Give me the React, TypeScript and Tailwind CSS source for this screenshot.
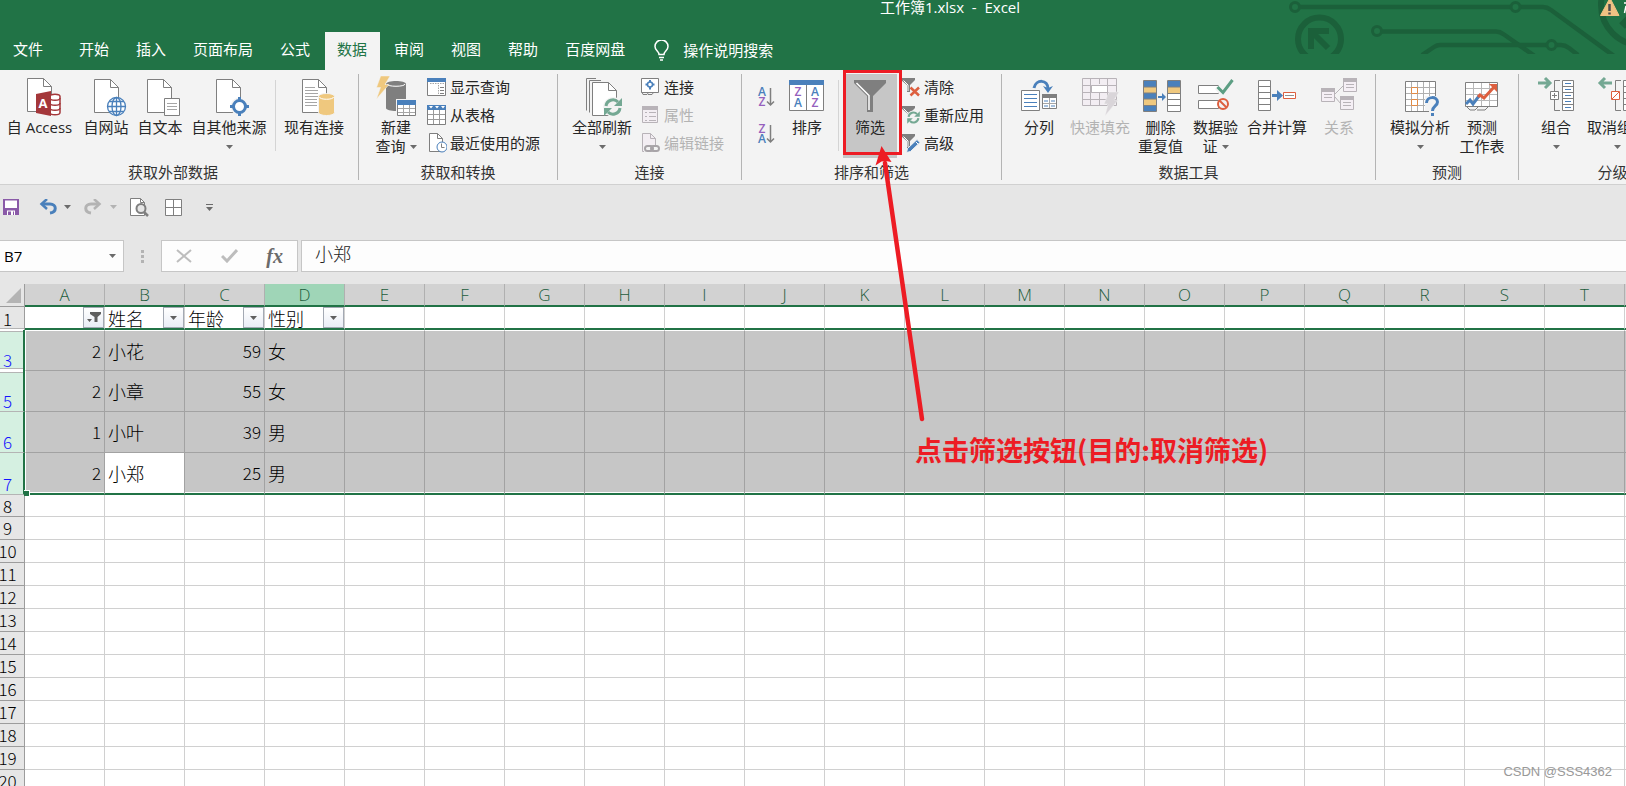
import type { ReactNode } from "react";
import clsx from "clsx";

const GRAY = "#7f7f7f";
const BLUE = "#4a80bb";
const GOLD = "#efc87e";
const GREEN = "#74a893";
const RED = "#dd5f3f";
const PURPLE = "#9560bd";
const OFF = "#b8b3b8";

const COLUMNS = "ABCDEFGHIJKLMNOPQRSTU".split("");
const PLAIN_ROWS = [8, 9, 10, 11, 12, 13, 14, 15, 16, 17, 18, 19, 20, 21];
const DATA_ROWS = [
  { row: 3, cells: ["2", "小花", "59", "女"] },
  { row: 5, cells: ["2", "小章", "55", "女"] },
  { row: 6, cells: ["1", "小叶", "39", "男"] },
  { row: 7, cells: ["2", "小郑", "25", "男"] },
];

function Caret({ className }: { className?: string }) {
  return (
    <svg width="7" height="4" viewBox="0 0 7 4" className={clsx("shrink-0", className)} fill="currentColor" aria-hidden="true">
      <path d="M0 0h7L3.5 4z" />
    </svg>
  );
}

function Doc({ x, y = 4, children }: { x: number; y?: number; children?: ReactNode }) {
  return (
    <g transform={`translate(${x} ${y})`}>
      <path d="M.5.5h16l8 8v25H.5z" fill="#fff" stroke={GRAY} />
      <path d="M16.5.5v8h8" fill="none" stroke={GRAY} />
      {children}
    </g>
  );
}

function Refresh({ x, y, size = 1 }: { x: number; y: number; size?: number }) {
  return (
    <g transform={`translate(${x} ${y}) scale(${size})`} fill="none" stroke={GREEN} strokeWidth="3">
      <circle r="10" fill="#f3f3f3" stroke="none" />
      <path d="M-7-1a7 7 0 0 1 12-4M7 1a7 7 0 0 1-12 4" />
      <path d="M9-9v8H1zM-9 9V1h8z" fill={GREEN} stroke="none" />
    </g>
  );
}

/* 48x42 icons for the large ribbon buttons */
const bigIcons: Record<string, ReactNode> = {
  access: (
    <>
      <Doc x={11} y={3} />
      <path d="M34 21.5c0-3 10-3 10 0v16c0 3-10 3-10 0z" fill="#fff" stroke="#a4373a" strokeWidth="1.5" />
      <path d="M34 23c0 3 10 3 10 0M34 28c0 3 10 3 10 0M34 33c0 3 10 3 10 0" fill="none" stroke="#a4373a" strokeWidth="1.5" />
      <path d="M20 19l15-3v25l-15-3z" fill="#a4373a" />
      <text x="27" y="33" textAnchor="middle" fontSize="13" fontWeight="700" fill="#fff">A</text>
    </>
  ),
  web: (
    <>
      <Doc x={12} />
      <g fill="none" stroke={BLUE} strokeWidth="1.3">
        <circle cx="34.5" cy="31.5" r="9" fill="#fff" />
        <ellipse cx="34.5" cy="31.5" rx="4.5" ry="9" />
        <path d="M34.5 22.5v18M25.5 31.5h18M27 26.5h15M27 36.5h15" />
      </g>
    </>
  ),
  text: (
    <>
      <Doc x={11} />
      <path d="M28.5 23.5h15v17h-15z" fill="#fff" stroke={GRAY} />
      <path d="M31 28.5h10M31 31.5h10M31 34.5h10" stroke="#a6a6a6" />
    </>
  ),
  other: (
    <>
      <Doc x={11} />
      <circle cx="34.5" cy="31.5" r="9" fill="#f3f3f3" />
      <circle cx="34.5" cy="31.5" r="6" fill="#fff" stroke={BLUE} strokeWidth="3" />
      <path d="M34.5 22v4M34.5 37v4M25 31.5h4M40 31.5h4" stroke={BLUE} strokeWidth="3" />
    </>
  ),
  existing: (
    <>
      <Doc x={12}>
        <path d="M3 8.5h10M3 11.5h13M3 14.5h13M3 17.5h13M3 20.5h12M3 23.5h12M3 26.5h12" stroke="#a6a6a6" />
      </Doc>
      <path d="M28.5 21.5c0-4 16-4 16 0v16c0 4-16 4-16 0z" fill={GOLD} stroke="#f3f3f3" />
      <path d="M29.5 22c0 3 14 3 14 0" fill="none" stroke="#fff" />
    </>
  ),
  query: (
    <>
      <path d="M14 9c0-4 20-4 20 0v24c0 4-20 4-20 0z" fill={GRAY} />
      <path d="M15 9c0 3 18 3 18 0" fill="none" stroke="#fff" />
      <path d="M8.7 1H18l-5 8.5h4L4.5 24l4-11.5h-4z" fill={GOLD} stroke="#f3f3f3" strokeWidth=".5" />
      <path d="M24 24h21v18H24z" fill="#f3f3f3" />
      <path d="M25.5 26.5h18v14h-18z" fill="#fff" stroke={GRAY} />
      <path d="M31.5 30v10M37.5 30v10M26 33.5h17M26 37.5h17" stroke="#a6a6a6" />
      <path d="M25 25h19v5H25z" fill={BLUE} />
    </>
  ),
  refreshAll: (
    <>
      <path d="M18 3.5H8.5v32" fill="none" stroke={GRAY} />
      <path d="M23 5.5H11.5v32" fill="none" stroke={GRAY} />
      <Doc x={14} y={7} />
      <Refresh x={35} y={32} />
    </>
  ),
  sort: (
    <>
      <path d="M6.5 5.5h34v30h-34z" fill="#fff" stroke={GRAY} />
      <path d="M23.5 10v25" stroke={GRAY} />
      <path d="M6 5h35v5H6z" fill={BLUE} />
      <g fontSize="12" fontWeight="600" textAnchor="middle">
        <text x="15" y="21" fill={PURPLE}>Z</text>
        <text x="15" y="32" fill={BLUE}>A</text>
        <text x="32" y="21" fill={BLUE}>A</text>
        <text x="32" y="32" fill={PURPLE}>Z</text>
      </g>
    </>
  ),
  filter: (
    <>
      <path d="M8 5h32v3L27 21v16h-6V21L8 8z" fill={GRAY} />
      <path d="M10.5 8L23 20.5V35" fill="none" stroke="#fff" strokeWidth="1.5" />
    </>
  ),
  split: (
    <>
      <path d="M6.5 15.5h18v20h-18z" fill="#fff" stroke={GRAY} />
      <path d="M9 19.5h13M9 23.5h13M9 27.5h13M9 31.5h13" stroke={BLUE} />
      <path d="M27.5 19.5h14v14h-14z" fill="#fff" stroke={GRAY} />
      <path d="M27 19h15v4H27z" fill={GRAY} />
      <path d="M34.5 23v10M28 28.5h13" stroke="#a6a6a6" />
      <path d="M29 26h4M36 26h4M29 31h4M36 31h4" stroke={BLUE} />
      <path d="M19 13c2-9 14-9 14 1" fill="none" stroke={BLUE} strokeWidth="3" />
      <path d="M28 11l5 7 5-7-5 2z" fill={BLUE} />
    </>
  ),
  flash: (
    <>
      <path d="M6.5 3.5h34v27h-34z" fill="#f3eef3" stroke={OFF} />
      <path d="M14.5 4v26M31.5 4v26M23.5 4v5M23.5 18v12M7 10.5h34M7 17.5h34M7 24.5h34" stroke={OFF} />
      <path d="M15.5 10.5h16v7h-16z" fill="#fff" stroke={OFF} />
      <path d="M33 17h10l-5 8h4L29 41l3-12h-4z" fill="#d9d5d9" stroke="#f3f3f3" strokeWidth=".5" />
    </>
  ),
  dedupe: (
    <>
      <path d="M6.5 5.5h13v31h-13z" fill={GOLD} stroke={GRAY} />
      <path d="M7 6h12v6H7zM7 18h12v6H7zM7 31h12v5H7z" fill={BLUE} />
      <path d="M7 12h12M7 18h12M7 24h12M7 30.5h12" stroke={GRAY} />
      <path d="M30.5 5.5h13v31h-13z" fill="#fff" stroke={GRAY} />
      <path d="M31 6h12v6H31z" fill={BLUE} />
      <path d="M31 12h12v6H31z" fill={GOLD} />
      <path d="M31 12h12M31 18.5h12M31 24.5h12M31 30.5h12" stroke={GRAY} />
      <path d="M21 21h4v-3l4 4-4 4v-3h-4z" fill={BLUE} />
    </>
  ),
  validate: (
    <>
      <path d="M6.5 10.5h20v8h-20zM6.5 25.5h20v8h-20z" fill="#fff" stroke={GRAY} />
      <path d="M25 12l6 6.5L41 5" fill="none" stroke="#f3f3f3" strokeWidth="6" />
      <path d="M25.5 12l5.5 5.5L40.5 5" fill="none" stroke="#5c9e83" strokeWidth="3" />
      <circle cx="31" cy="29" r="5" fill="#f3f3f3" stroke={RED} strokeWidth="2" />
      <path d="M27.5 25.5l7 7" stroke={RED} strokeWidth="2" />
    </>
  ),
  consolidate: (
    <>
      <path d="M5.5 5.5h12v30h-12z" fill="#fff" stroke={GRAY} />
      <path d="M6 11.5h11M6 17.5h11M6 23.5h11M6 29.5h11" stroke={GRAY} />
      <path d="M19 19h5v-4l6 5.5-6 5.5v-4h-5z" fill={BLUE} />
      <path d="M30.5 17.5h12v6h-12z" fill="#fff" stroke={RED} />
      <path d="M32 20.5h9" stroke="#8f8f8f" />
    </>
  ),
  relations: (
    <>
      <path d="M20 19l8-8M20 22l6 7" stroke={OFF} />
      <g fill="#f5eff5" stroke={OFF}>
        <path d="M6.5 13.5h13v13h-13zM28.5 3.5h13v13h-13zM25.5 21.5h13v13h-13z" />
        <path d="M9 19.5h8M9 22.5h8M31 9.5h8M31 12.5h8M28 27.5h8M28 30.5h8" />
      </g>
      <path d="M6 13h14v4H6zM28 3h14v4H28zM25 21h14v4H25z" fill={OFF} />
    </>
  ),
  whatIf: (
    <>
      <path d="M9.5 6.5h30v30h-30z" fill="#fff" stroke={GRAY} />
      <path d="M15.5 7v29M21.5 7v29M27.5 7v29M33.5 7v29M10 12.5h29M10 18.5h29M10 24.5h29M10 30.5h29" stroke="#b0b0b0" />
      <path d="M15.5 12.5h6v6h-6zM15.5 24.5h6v6h-6z" fill="#fff" stroke="#e08a45" />
      <path d="M29 21h14v21H33v-6h-4z" fill="#f3f3f3" />
      <path d="M30.5 28c0-7 11-7 11-1 0 4-5 4-5 9" fill="none" stroke={BLUE} strokeWidth="3" />
      <path d="M35 38h3v3h-3z" fill={BLUE} />
    </>
  ),
  forecast: (
    <>
      <path d="M7.5 7.5h32v24h-32z" fill="#fff" stroke={GRAY} />
      <path d="M15.5 8v23M23.5 8v23M31.5 8v23M8 13.5h31M8 19.5h31M8 25.5h31" stroke="#b8b8b8" />
      <path d="M9 32l3 3h5l3-3M19 35h8l3-3" fill="none" stroke={GRAY} />
      <path d="M8 29l4-4 3 4 6-8" fill="none" stroke={BLUE} strokeWidth="3" />
      <path d="M20 22l2-2 4 3L37 11" fill="none" stroke={RED} strokeWidth="3" />
      <path d="M31 9h8v8z" fill={RED} />
    </>
  ),
  group: (
    <>
      <path d="M6 8h11M13 3l5 5-5 5" fill="none" stroke={GREEN} strokeWidth="3" />
      <path d="M28 5.5h-5.5V17M22.5 25v10.5H28" fill="none" stroke={GRAY} />
      <path d="M18.5 16.5h8v8h-8z" fill="#fff" stroke={GRAY} />
      <path d="M20 20.5h5M22.5 18v5" stroke={GRAY} />
      <path d="M30.5 5.5h11v30h-11z" fill="#fff" stroke={GRAY} />
      <path d="M31 11.5h10M31 17.5h10M31 23.5h10M31 29.5h10" stroke={GRAY} />
      <path d="M33 8.5h6M33 14.5h6M33 20.5h6M33 26.5h6M33 32.5h6" stroke={BLUE} />
    </>
  ),
  ungroup: (
    <>
      <path d="M19 8H8M12 3L7 8l5 5" fill="none" stroke={GREEN} strokeWidth="3" />
      <path d="M28 5.5h-5.5V17M22.5 25v10.5H28" fill="none" stroke={GRAY} />
      <path d="M18.5 16.5h8v8h-8z" fill="#fff" stroke={RED} />
      <path d="M19 24l7-7" stroke={RED} />
      <path d="M30.5 5.5h11v30h-11z" fill="#fff" stroke={GRAY} />
      <path d="M31 11.5h10M31 17.5h10M31 23.5h10M31 29.5h10" stroke={GRAY} />
    </>
  ),
};

const smallFunnel = (
  <>
    <path d="M0 1h14v2L9 8v7H6V8L0 3z" fill={GRAY} />
    <path d="M2.5 3.5L7 8v6" fill="none" stroke="#fff" />
  </>
);

/* 20x20 icons for the stacked ribbon buttons */
const smallIcons: Record<string, ReactNode> = {
  showQuery: (
    <>
      <path d="M.5 1.5h18v17H.5z" fill="#fff" stroke={GRAY} />
      <path d="M0 1h19v4H0z" fill={BLUE} />
      <path d="M11.5 8v10M3 6.5h14" stroke="#a6a6a6" strokeDasharray="1.5 1" />
      <path d="M13 10.5h4M13 13.5h4M13 16.5h4" stroke={GRAY} />
    </>
  ),
  fromTable: (
    <>
      <path d="M.5 1.5h18v18H.5z" fill="#fff" stroke={GRAY} />
      <path d="M6.5 5v14M12.5 5v14M1 9.5h17M1 14.5h17" stroke="#9a9a9a" />
      <path d="M0 0h19v5H0z" fill={BLUE} />
      <path d="M2 1h4L4 3.5zM8 1h4l-2 2.5zM14 1h4l-2 2.5z" fill="#fff" />
    </>
  ),
  recent: (
    <>
      <path d="M2.5.5h8l5 5v13h-13z" fill="#fff" stroke={GRAY} />
      <path d="M10.5.5v5h5" fill="none" stroke={GRAY} />
      <circle cx="15" cy="14" r="5" fill="#fff" stroke={BLUE} />
      <path d="M14.5 10.5v4h3" fill="none" stroke={GRAY} />
    </>
  ),
  links: (
    <>
      <path d="M.5 1.5h17v14H.5z" fill="#fff" stroke={GRAY} />
      <circle cx="9" cy="7.5" r="2.5" fill="none" stroke={BLUE} strokeWidth="1.5" />
      <path d="M9 3v2M9 10v2.5M4.5 7.5h2M11.5 7.5h2" stroke={BLUE} strokeWidth="2" />
      <path d="M1 15l1 2.5h4l1.5-2M7 17.5h4l1.5-2" fill="none" stroke={GRAY} />
    </>
  ),
  props: (
    <>
      <path d="M1.5 1.5h15v16h-15z" fill="#f3eef3" stroke={OFF} />
      <path d="M1 1h16v4H1z" fill={OFF} />
      <path d="M8 7.5h7M8 11.5h7M8 15.5h7M4 7.5h2M4 11.5h2M4 15.5h2" stroke={OFF} />
    </>
  ),
  editLinks: (
    <>
      <path d="M1.5.5h8l5 5v13h-13z" fill="#f3eef3" stroke={OFF} />
      <path d="M9.5.5v5h5" fill="none" stroke={OFF} />
      <path d="M3 12h16v8H3z" fill="#f3f3f3" />
      <rect x="4" y="13" width="8" height="5" rx="2.5" fill="none" stroke="#a8a4a8" strokeWidth="2" />
      <rect x="10" y="13" width="8" height="5" rx="2.5" fill="none" stroke="#a8a4a8" strokeWidth="2" />
    </>
  ),
  clear: (
    <>
      {smallFunnel}
      <path d="M9.5 10.5l8.5 8M18 10.5l-8.5 8" stroke={RED} strokeWidth="2.5" />
    </>
  ),
  reapply: (
    <>
      {smallFunnel}
      <Refresh x={12.5} y={12.5} size={0.7} />
    </>
  ),
  advanced: (
    <>
      {smallFunnel}
      <path d="M5.5 19.5l1-4L16 6.5l3 3L9.5 18.5z" fill={BLUE} stroke="#f3f3f3" />
      <path d="M15 9l2 2" stroke="#fff" />
    </>
  ),
};

type BigProps = {
  icon: string;
  lines: string[];
  caret?: boolean;
  disabled?: boolean;
  active?: boolean;
  className: string;
};

function BigButton({ icon, lines, caret, disabled, active, className }: BigProps) {
  return (
    <button
      type="button"
      disabled={disabled}
      aria-pressed={active}
      className={clsx(
        "flex h-[84px] shrink-0 flex-col items-center pt-px leading-[19px] whitespace-nowrap",
        disabled ? "text-[#b3b3b3]" : "text-[#262626]",
        active && "bg-[#c6c6c6]",
        className,
      )}
    >
      <svg width="48" height="42" viewBox="0 0 48 42" className="mb-px shrink-0" aria-hidden="true">{bigIcons[icon]}</svg>
      <span className="block">{lines[0]}</span>
      {(lines[1] || caret) && (
        <span className="flex h-[19px] items-center gap-1">
          {lines[1]}
          {caret && <Caret className="text-[#6b6b6b]" />}
        </span>
      )}
    </button>
  );
}

function SmallButton({ icon, label, disabled }: { icon: string; label: string; disabled?: boolean }) {
  return (
    <button
      type="button"
      disabled={disabled}
      className={clsx("flex h-7 items-center gap-[3px] pb-0.5 whitespace-nowrap", disabled ? "text-[#b3b3b3]" : "text-[#262626]")}
    >
      <svg width="20" height="20" viewBox="0 0 20 20" className="shrink-0" aria-hidden="true">{smallIcons[icon]}</svg>
      {label}
    </button>
  );
}

function Group({ label, className, children }: { label: string; className: string; children: ReactNode }) {
  return (
    <section aria-label={label} className={clsx("relative flex shrink-0 flex-col border-r border-[#b4b4b4]", className)}>
      <div className="flex h-[84px]">{children}</div>
      <div className="pt-1 text-center leading-[20px] text-[#333]">{label}</div>
    </section>
  );
}

function SortButton({ first, second, label }: { first: string; second: string; label: string }) {
  return (
    <button type="button" aria-label={label} className="flex h-[37px] items-center">
      <svg width="20" height="22" viewBox="0 0 20 22" className="overflow-visible" aria-hidden="true">
        <g fontSize="12" fontWeight="600" textAnchor="middle">
          <text x="4" y="10" fill={first === "A" ? BLUE : PURPLE}>{first}</text>
          <text x="4" y="20" fill={second === "A" ? BLUE : PURPLE}>{second}</text>
        </g>
        <path d="M12.5 2v17M9 15.5l3.5 3.5 3.5-3.5" fill="none" stroke={GRAY} strokeWidth="1.5" />
      </svg>
    </button>
  );
}

function Divider() {
  return <div className="mt-1.5 h-[71px] w-px shrink-0 bg-[#d4d4d4]" />;
}

function TitleBar() {
  const tabs = ["开始", "插入", "页面布局", "公式", "数据", "审阅", "视图", "帮助", "百度网盘"];
  return (
    <header className="relative h-[70px] shrink-0 overflow-hidden bg-[#217346] text-white">
      <svg width="366" height="54" viewBox="0 0 366 54" className="absolute top-0 right-0" aria-hidden="true">
        <g fill="none" stroke="#1b603a" strokeWidth="4.5">
          <circle cx="35" cy="7" r="4.5" strokeWidth="3" />
          <path d="M40 7h210M261 7h22q4 0 8 3l63 46" />
          <circle cx="255.5" cy="7" r="4.5" strokeWidth="3" />
          <circle cx="117" cy="31" r="4.5" strokeWidth="3" />
          <path d="M122 31.5h114q4 0 8 3l30 21" />
          <path d="M162 55l12-8q3-2 6-2h106M297 45h4q4 0 8 3l9 7" />
          <circle cx="291.5" cy="45" r="4.5" strokeWidth="3" />
          <circle cx="59.5" cy="39" r="21.5" strokeWidth="6" />
          <path d="M51 49V31h18M52 32l16 16" strokeWidth="6" />
          <circle cx="381" cy="5" r="40" strokeWidth="6" />
          <path d="M372 16l-10 10" strokeWidth="8" />
        </g>
        <path d="M350-2L359 15.5h-18.5z" fill="#efc283" stroke="#efc283" />
        <path d="M349.5 4v7M349.5 12.5v2" stroke="#4d4d4d" strokeWidth="2.5" />
        <path d="M364 3h2M366 6l-1.5 7" stroke="#fff" strokeWidth="1.5" />
      </svg>
      <div className="flex h-8 justify-center pl-[274px]">
        <h1 className="text-[15px] leading-[15px] whitespace-pre">工作簿1.xlsx  -  Excel</h1>
      </div>
      <nav className="relative flex h-[38px] gap-0.5 whitespace-nowrap">
        <button type="button" className="w-[65px] pb-1 pl-[13px] text-left">文件</button>
        {tabs.map((tab) => (
          <button
            key={tab}
            type="button"
            className={clsx("shrink-0 pr-[13px] pb-1 pl-3", tab === "数据" && "bg-[#f3f3f3] text-[#217346]")}
          >
            {tab}
          </button>
        ))}
        <button type="button" className="flex items-center gap-3.5 pb-0.5 pl-3.5">
          <svg width="15" height="21" viewBox="0 0 15 21" fill="none" stroke="#fff" strokeWidth="1.5" aria-hidden="true">
            <path d="M5 14.5c0-3-4-4-4-8a6.5 6.5 0 0 1 13 0c0 4-4 5-4 8zM5 17.5h5M6 20h3" />
          </svg>
          操作说明搜索
        </button>
      </nav>
    </header>
  );
}

function Ribbon() {
  return (
    <div className="flex h-[115px] shrink-0 overflow-hidden border-b border-[#d0d0d0] bg-[#f3f3f3] pt-1 pb-1">
      <Group label="获取外部数据" className="w-[359px] pr-3">
        <BigButton icon="access" lines={["自 Access"]} className="w-[79px]" />
        <BigButton icon="web" lines={["自网站"]} className="w-[54px]" />
        <BigButton icon="text" lines={["自文本"]} className="w-[54px]" />
        <BigButton icon="other" lines={["自其他来源"]} caret className="w-[84px]" />
        <div className="w-1 shrink-0" />
        <Divider />
        <BigButton icon="existing" lines={["现有连接"]} className="w-[76px]" />
      </Group>
      <Group label="获取和转换" className="w-[199px]">
        <BigButton icon="query" lines={["新建", "查询"]} caret className="ml-2 w-[58px]" />
        <div className="ml-0.5">
          <SmallButton icon="showQuery" label="显示查询" />
          <SmallButton icon="fromTable" label="从表格" />
          <SmallButton icon="recent" label="最近使用的源" />
        </div>
      </Group>
      <Group label="连接" className="w-[184px]">
        <BigButton icon="refreshAll" lines={["全部刷新"]} caret className="ml-2 w-[72px]" />
        <div className="ml-[3px]">
          <SmallButton icon="links" label="连接" />
          <SmallButton icon="props" label="属性" disabled />
          <SmallButton icon="editLinks" label="编辑链接" disabled />
        </div>
      </Group>
      <Group label="排序和筛选" className="w-[260px]">
        <div className="ml-4 flex flex-col pt-1">
          <SortButton first="A" second="Z" label="升序" />
          <SortButton first="Z" second="A" label="降序" />
        </div>
        <BigButton icon="sort" lines={["排序"]} className="ml-1 w-[50px]" />
        <div className="w-1.5 shrink-0" />
        <Divider />
        <BigButton icon="filter" lines={["筛选"]} active className="ml-1 w-[54px]" />
        <div className="ml-1">
          <SmallButton icon="clear" label="清除" />
          <SmallButton icon="reapply" label="重新应用" />
          <SmallButton icon="advanced" label="高级" />
        </div>
        {/* callout frame round the filter button */}
        <div className="absolute -top-1 left-[101px] h-[85px] w-[59px] border-3 border-[#ed1c24]" />
      </Group>
      <Group label="数据工具" className="w-[374px]">
        <BigButton icon="split" lines={["分列"]} className="ml-2 w-[58px]" />
        <BigButton icon="flash" lines={["快速填充"]} disabled className="w-16" />
        <BigButton icon="dedupe" lines={["删除", "重复值"]} className="w-[57px]" />
        <BigButton icon="validate" lines={["数据验", "证"]} caret className="w-[53px]" />
        <BigButton icon="consolidate" lines={["合并计算"]} className="w-[70px]" />
        <BigButton icon="relations" lines={["关系"]} disabled className="w-[54px]" />
      </Group>
      <Group label="预测" className="w-[143px]">
        <BigButton icon="whatIf" lines={["模拟分析"]} caret className="ml-2 w-[72px]" />
        <BigButton icon="forecast" lines={["预测", "工作表"]} className="w-[52px]" />
      </Group>
      <Group label="分级显示" className="w-[218px]">
        <BigButton icon="group" lines={["组合"]} caret className="ml-[7px] w-[60px]" />
        <BigButton icon="ungroup" lines={["取消组合"]} caret className="w-[62px]" />
      </Group>
    </div>
  );
}

function QuickAccess() {
  return (
    <div className="flex h-11 shrink-0 items-center pl-[3px] text-[#6b6b6b]">
      <button type="button" aria-label="保存">
        <svg width="16" height="16" viewBox="0 0 16 16" aria-hidden="true">
          <path d="M0 0h16v16H0z" fill="#8a5aa8" />
          <path d="M2 1.5h12V9H2zM4 11.5h8V16H4z" fill="#fff" />
          <path d="M5 12.5h3V16H5zM10 12.5h1V16h-1z" fill="#8a5aa8" />
        </svg>
      </button>
      <button type="button" aria-label="撤消" className="ml-5 flex items-center gap-1.5 text-[#4a80bb]">
        <svg width="19" height="16" viewBox="0 0 19 16" fill="none" stroke="currentColor" strokeWidth="3" aria-hidden="true">
          <path d="M3 5h8c7 0 7 8 0 9" />
          <path d="M8 0L2.5 5 8 10" strokeWidth="2.5" />
        </svg>
        <Caret className="text-[#6b6b6b]" />
      </button>
      <button type="button" aria-label="恢复" disabled className="ml-3 flex items-center gap-2 text-[#b3b3b3]">
        <svg width="19" height="16" viewBox="0 0 19 16" fill="none" stroke="currentColor" strokeWidth="3" aria-hidden="true">
          <path d="M16 5H8C1 5 1 13 8 14" />
          <path d="M11 0l5.5 5L11 10" strokeWidth="2.5" />
        </svg>
        <Caret />
      </button>
      <button type="button" aria-label="打印预览" className="ml-3">
        <svg width="20" height="20" viewBox="0 0 20 20" fill="none" stroke={GRAY} aria-hidden="true">
          <path d="M1.5 1.5h10l4 4v13h-14z" fill="#fff" />
          <path d="M11.5 1.5v4h4" />
          <circle cx="12" cy="11.5" r="4.5" fill="#e6e6e6" strokeWidth="2" />
          <path d="M15 15l4 4" strokeWidth="2.5" />
        </svg>
      </button>
      <button type="button" aria-label="边框" className="ml-4">
        <svg width="17" height="17" viewBox="0 0 17 17" fill="#fff" stroke={GRAY} aria-hidden="true">
          <path d="M.5.5h16v16H.5zM8.5.5v16M.5 8.5h16" />
        </svg>
      </button>
      <button type="button" aria-label="自定义快速访问工具栏" className="ml-6 flex w-[7px] flex-col gap-0.5">
        <span className="h-px w-full bg-[#6b6b6b]" />
        <Caret />
      </button>
    </div>
  );
}

function FormulaBar() {
  return (
    <div className="mt-[11px] flex h-8 shrink-0">
      <div className="flex w-[124px] shrink-0 items-center border border-l-0 border-[#c6c6c6] bg-[#fdfdfd] pr-[7px]">
        <input aria-label="名称框" defaultValue="B7" className="w-full min-w-0 bg-transparent pl-1 outline-none" />
        <Caret className="text-[#6b6b6b]" />
      </div>
      <div className="flex w-[37px] shrink-0 flex-col items-center justify-center gap-0.5">
        <span className="size-[3px] bg-[#b3b3b3]" />
        <span className="size-[3px] bg-[#b3b3b3]" />
        <span className="size-[3px] bg-[#b3b3b3]" />
      </div>
      <div className="flex w-[137px] shrink-0 items-center justify-between border border-[#c6c6c6] bg-[#fdfdfd] px-3.5 text-[#bdbdbd]">
        <button type="button" aria-label="取消">
          <svg width="16" height="14" viewBox="0 0 16 14" fill="none" stroke="currentColor" strokeWidth="2" aria-hidden="true">
            <path d="M1 1l14 12M15 1L1 13" />
          </svg>
        </button>
        <button type="button" aria-label="输入">
          <svg width="17" height="14" viewBox="0 0 17 14" fill="none" stroke="currentColor" strokeWidth="3" aria-hidden="true">
            <path d="M1 7l5 5L16 1" />
          </svg>
        </button>
        <button type="button" className="font-['Liberation_Serif',serif] text-[20px] leading-6 font-bold text-[#6b6b6b] italic">fx</button>
      </div>
      <input
        aria-label="编辑栏"
        defaultValue="小郑"
        className="ml-[3px] min-w-0 flex-1 border border-r-0 border-[#c6c6c6] bg-[#fdfdfd] pb-1.5 pl-[13px] font-['Noto_Sans_CJK_SC',sans-serif] text-[18px] font-light text-[#222] outline-none"
      />
    </div>
  );
}

function FilterButton({ active, label }: { active?: boolean; label: string }) {
  return (
    <button
      type="button"
      aria-label={label}
      className="flex size-[21px] shrink-0 items-center justify-center border border-[#a3a9b3] bg-linear-to-b from-white to-[#e9edf5] text-[#5f5f5f]"
    >
      {active ? (
        <svg width="14" height="11" viewBox="0 0 14 11" fill="currentColor" aria-hidden="true">
          <path d="M3 0h11v2l-3.5 3v5h-3V5L3 2zM0 7h5L2.5 10z" />
        </svg>
      ) : (
        <Caret />
      )}
    </button>
  );
}

function rowHeadClass(row: number) {
  if (row === 3) return "bg-[#d5f0e1] pb-px shadow-[inset_0_1px_0_#fff,inset_0_2px_0_#b4b4b4,inset_0_-2px_0_#fff,inset_0_-3px_0_#b4b4b4]";
  if (row === 5) return "border-b border-b-[#b4b4b4] bg-[#d5f0e1] shadow-[inset_0_1px_0_#fff,inset_0_2px_0_#b4b4b4]";
  return "border-b border-b-[#b4b4b4] bg-[#d5f0e1]";
}

function Sheet() {
  const headings = ["", "姓名", "年龄", "性别"];
  return (
    <div className="mt-3 min-h-0 flex-1 overflow-hidden bg-white">
      <table className="w-max table-fixed border-separate border-spacing-0 font-['Noto_Sans_CJK_SC',sans-serif] text-[17px] leading-[20px] font-light text-black">
        <colgroup>
          <col className="w-[25px]" />
          {COLUMNS.map((c) => <col key={c} className="w-20" />)}
        </colgroup>
        <thead>
          <tr>
            <td className="h-[23px] border-r border-b border-[#9c9c9c] bg-[#e6e6e6] p-0">
              <svg width="15" height="15" viewBox="0 0 15 15" className="ml-1.5" aria-hidden="true">
                <path d="M15 0v15H0z" fill="#b4b4b4" />
              </svg>
            </td>
            {COLUMNS.map((c) => (
              <th
                key={c}
                scope="col"
                className={clsx(
                  "h-[23px] border-r border-b-2 border-r-[#b0b0b0] border-b-[#217346] p-0 pt-px font-['Open_Sans',sans-serif] font-light text-[#1c5c3b]",
                  c === "D" ? "bg-[#9fd5b7]" : "bg-[#d2d2d2]",
                )}
              >
                {c}
              </th>
            ))}
          </tr>
        </thead>
        <tbody>
          <tr>
            <th scope="row" className="h-[23px] border-r border-[#9c9c9c] bg-[#e6e6e6] p-0 font-light shadow-[inset_0_-1px_0_#fff,inset_0_-2px_0_#b4b4b4]">
              <span className="-ml-2 block w-[31px]">1</span>
            </th>
            {COLUMNS.map((c, i) => (
              <td key={c} className="h-[23px] border-r border-b-2 border-r-[#d0d0d0] border-b-[#217346] p-0">
                {i < 4 && (
                  <div className="flex h-[21px] items-center justify-between pl-[3px] text-[18px]">
                    <span>{headings[i]}</span>
                    <FilterButton active={i === 0} label={`筛选 ${headings[i] || c}`} />
                  </div>
                )}
              </td>
            ))}
          </tr>
          {DATA_ROWS.map(({ row, cells }) => {
            const last = row === 7;
            return (
              <tr key={row}>
                <th
                  scope="row"
                  className={clsx("border-r-2 border-r-[#217346] p-0 align-bottom font-light text-[#1414ff]", last ? "h-[42px]" : "h-[41px]", rowHeadClass(row))}
                >
                  <span className="-ml-2 block w-[31px]">{row}</span>
                </th>
                {COLUMNS.map((c, i) => (
                  <td
                    key={c}
                    className={clsx(
                      "relative border-r border-r-[#a2a2a2] p-0 px-[3px]",
                      last ? "h-[42px] border-b-2 border-b-[#217346] shadow-[inset_0_-1px_0_#fff]" : "h-[41px] border-b border-b-[#a2a2a2]",
                      row === 3 && "border-t border-t-white",
                      i === 0 && "border-l border-l-white",
                      i % 2 === 0 ? "text-right" : "text-left text-[18px]",
                      last && i === 1 ? "bg-white" : "bg-[#c6c6c6]",
                    )}
                  >
                    {cells[i]}
                    {last && i === 0 && <span className="absolute -bottom-[3px] -left-0.5 size-1.5 border-t border-r border-white bg-[#217346]" />}
                  </td>
                ))}
              </tr>
            );
          })}
          {PLAIN_ROWS.map((row) => (
            <tr key={row}>
              <th scope="row" className={clsx("border-r border-b border-[#9c9c9c] bg-[#e6e6e6] p-0 font-light", row === 8 ? "h-[22px]" : "h-[23px]")}>
                <span className="-ml-2 block w-[31px]">{row}</span>
              </th>
              {COLUMNS.map((c) => <td key={c} className="border-r border-b border-[#d0d0d0] p-0" />)}
            </tr>
          ))}
        </tbody>
      </table>
    </div>
  );
}

export default function App() {
  return (
    <div className="relative flex h-screen flex-col overflow-hidden bg-[#e6e6e6] font-['Open_Sans','Noto_Sans_CJK_SC',sans-serif] text-[15px]">
      <TitleBar />
      <Ribbon />
      <QuickAccess />
      <FormulaBar />
      <Sheet />
      <svg width="60" height="280" viewBox="0 0 60 280" className="pointer-events-none absolute top-[145px] left-[870px]" aria-hidden="true">
        <path d="M52 274L15 18" stroke="#ed1c24" strokeWidth="4.5" strokeLinecap="round" />
        <path d="M11.5 1l10 16-6-1-4 .5-6 4z" fill="#ed1c24" />
      </svg>
      <p className="absolute top-[430px] left-[915px] text-[27px] leading-10 font-bold whitespace-nowrap text-[#ed1c24] font-['Noto_Sans_CJK_SC',sans-serif]">
        点击筛选按钮(目的:取消筛选)
      </p>
      <span className="absolute right-3.5 bottom-1 text-[13px] leading-5 text-[#999] font-['Liberation_Sans',sans-serif]">CSDN @SSS4362</span>
    </div>
  );
}
